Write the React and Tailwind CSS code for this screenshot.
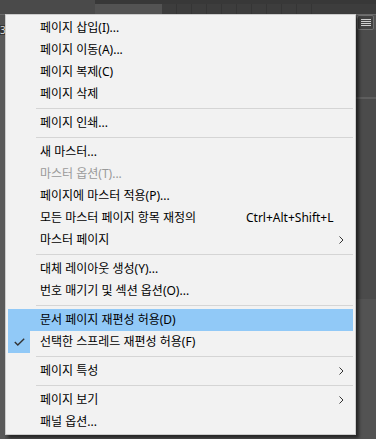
import React from 'react';

const items = [
  { label: '페이지 삽입(I)...' },
  { label: '페이지 이동(A)...' },
  { label: '페이지 복제(C)' },
  { label: '페이지 삭제' },
  { sep: true },
  { label: '페이지 인쇄...' },
  { sep: true },
  { label: '새 마스터...' },
  { label: '마스터 옵션(T)...', disabled: true },
  { label: '페이지에 마스터 적용(P)...' },
  { label: '모든 마스터 페이지 항목 재정의', shortcut: 'Ctrl+Alt+Shift+L' },
  { label: '마스터 페이지', sub: true },
  { sep: true },
  { label: '대체 레이아웃 생성(Y)...' },
  { label: '번호 매기기 및 섹션 옵션(O)...' },
  { sep: true },
  { label: '문서 페이지 재편성 허용(D)', active: true },
  { label: '선택한 스프레드 재편성 허용(F)', checked: true },
  { sep: true },
  { label: '페이지 특성', sub: true },
  { sep: true },
  { label: '페이지 보기', sub: true },
  { label: '패널 옵션...' },
];

function Arrow() {
  return (
    <svg width="5" height="8" viewBox="0 0 5 8" className="mr-[9px] shrink-0">
      <path d="M0.5 0.5 L4 4 L0.5 7.5" fill="none" stroke="#333" strokeWidth="1" />
    </svg>
  );
}

function Check() {
  return (
    <svg width="11" height="8" viewBox="0 0 11 8">
      <path d="M0.8 4 L3.8 7 L10.2 0.8" fill="none" stroke="#333" strokeWidth="1.4" />
    </svg>
  );
}

function MenuRow({ item }) {
  if (item.sep) {
    return (
      <div className="h-[7px] flex items-center">
        <div className="ml-[28px] w-full h-px bg-[#d5d5d5]" />
      </div>
    );
  }
  return (
    <div className={`h-[22px] flex items-center relative ${item.active ? 'bg-[#91c9f7]' : ''}`}>
      {item.checked && (
        <div className="absolute left-0 top-0 h-[22px] w-[22px] bg-[#91c9f7] flex items-center justify-center">
          <Check />
        </div>
      )}
      <span className={`pl-[32px] w-[238px] shrink-0 whitespace-nowrap ${item.disabled ? 'text-[#9a9a9a]' : 'text-black'}`}>
        {item.label}
      </span>
      {item.shortcut && <span className="whitespace-nowrap text-black">{item.shortcut}</span>}
      <div className="flex-1" />
      {item.sub && <Arrow />}
    </div>
  );
}

export default function App() {
  return (
    <div className="w-[376px] h-[439px] bg-[#535353] relative overflow-hidden font-['Noto_Sans','Noto_Sans_CJK_KR',sans-serif]">
      {/* top strip */}
      <div className="flex h-[4px]">
        <div className="w-[95px] bg-[#4a4a4a]" />
        <div className="flex-1 bg-[#383838]" />
      </div>
      <div className="flex h-[10px]">
        <div className="w-[95px] bg-[#4a4a4a]" />
        <div className="w-[67px] bg-[#535353]" />
        <div className="flex bg-[#3d3d3d]">
          {Array.from({ length: 10 }).map((_, i) => (
            <div key={i} className="w-[15px] border-r border-[#353535]" />
          ))}
        </div>
        <div className="flex-1 bg-[#3d3d3d]" />
      </div>
      <div className="h-px bg-[#6a6a6a]" />
      <div className="flex">
        <div className="w-[5px] flex flex-col">
          <div className="h-[10px] bg-[#535353]" />
          <div className="h-[10px] bg-[#363636] text-[#d8d8d8] text-[10px] leading-[10px] overflow-hidden">3</div>
          <div className="h-[404px] bg-[#5a5a5a]" />
        </div>
        <div className="flex-1" />
        <div className="w-[20px] flex flex-col">
          <div className="h-[15px] w-[17px] ml-[1px] border border-[#707070] rounded-[2px] bg-[#424242] flex flex-col items-center justify-center gap-[1.3px]">
            <div className="w-[10px] h-px bg-[#cfcfcf]" />
            <div className="w-[10px] h-px bg-[#cfcfcf]" />
            <div className="w-[10px] h-px bg-[#cfcfcf]" />
            <div className="w-[10px] h-px bg-[#cfcfcf]" />
          </div>
          <div className="h-[67px] bg-[#4b4b4b]" />
          <div className="h-[2px] bg-[#5e5e5e]" />
          <div className="h-[200px] bg-[#4b4b4b]" />
        </div>
      </div>

      {/* popup menu */}
      <div className="absolute left-[5px] top-[14px] w-[351px] bg-[#f2f2f2] border border-[#cccccc] pt-[2px] pb-[1px] px-[2px] text-[12px] shadow-[3px_3px_3px_rgba(0,0,0,0.55)]">
        {items.map((item, i) => (
          <MenuRow key={i} item={item} />
        ))}
      </div>
    </div>
  );
}
